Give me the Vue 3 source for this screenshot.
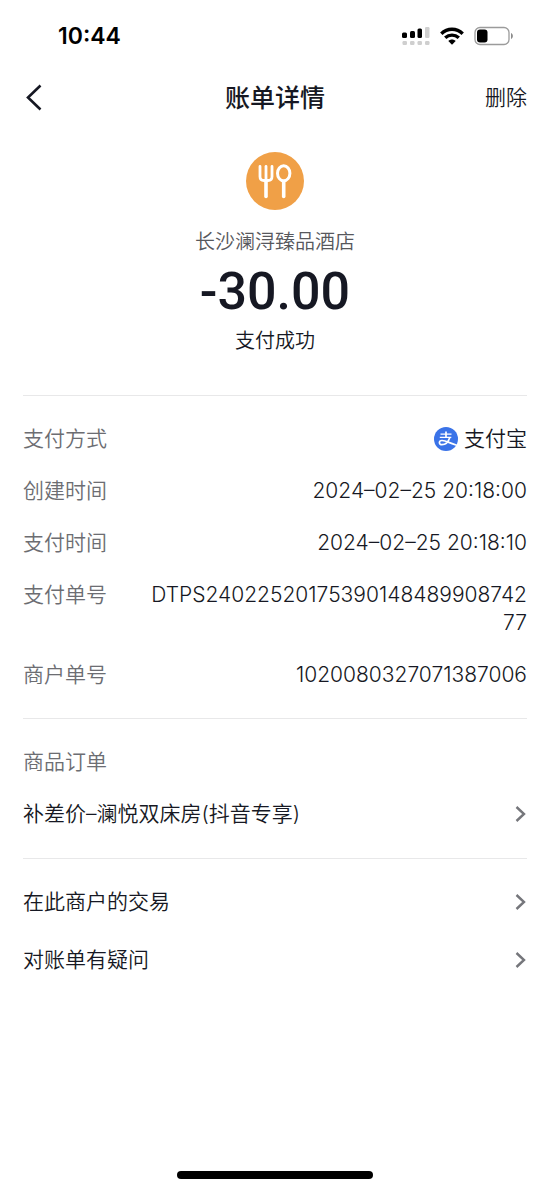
<script setup>
const details = [
  { label: '支付方式', value: '支付宝', alipay: true },
  { label: '创建时间', value: '2024–02–25 20:18:00' },
  { label: '支付时间', value: '2024–02–25 20:18:10' },
  { label: '支付单号', value: 'DTPS2402252017539014848990874277' },
  { label: '商户单号', value: '1020080327071387006' },
]
const links = ['在此商户的交易', '对账单有疑问']
</script>

<template>
  <div class="page">
    <div class="status">
      <time class="clock">10:44</time>
      <div class="status-icons">
        <svg width="28" height="20" viewBox="0 0 28 20" aria-hidden="true">
          <g fill="#000">
            <rect x="0" y="6.500" width="5" height="5.500" rx="1.500" />
            <rect x="8" y="5" width="5" height="7" rx="1.500" />
            <rect x="15.500" y="2.500" width="4.500" height="9.500" rx="1.500" />
          </g>
          <g fill="#cfcfcf">
            <rect x="23" y="1" width="4.500" height="11" rx="1.200" />
            <rect x="0.500" y="15" width="4.500" height="4" rx="1.200" />
            <rect x="8" y="15" width="4.500" height="4" rx="1.200" />
            <rect x="15.500" y="15" width="4.500" height="4" rx="1.200" />
            <rect x="23" y="15" width="4.500" height="4" rx="1.200" />
          </g>
        </svg>
        <svg width="24" height="18" viewBox="0 0 24 18" aria-hidden="true">
          <g fill="none" stroke="#000" stroke-width="3.400">
            <path d="M1.300 6.700C7.400 0.800 16.600 0.800 22.700 6.700" />
            <path d="M5.200 10.800C9.200 7.200 14.800 7.200 18.800 10.800" />
          </g>
          <path d="M8.300 14C10.500 12 13.500 12 15.700 14L12 17.800Z" fill="#000" />
        </svg>
        <svg width="40" height="20" viewBox="0 0 40 20" aria-hidden="true">
          <rect x="1" y="1.500" width="34" height="17" rx="5" fill="none" stroke="#9b9b9b" stroke-width="1.300" />
          <rect x="3" y="3.500" width="10.500" height="13" rx="3" fill="#000" />
          <path d="M37 7C39.500 8 39.500 12 37 13Z" fill="#8c8c8c" />
        </svg>
      </div>
    </div>

    <header class="nav">
      <button class="back" type="button" aria-label="返回">
        <svg width="20" height="28" viewBox="0 0 20 28" aria-hidden="true">
          <path d="M17.500 1.500L5 13.500L17.500 25.500" fill="none" stroke="#161823" stroke-width="2.600" />
        </svg>
      </button>
      <h1 class="title">账单详情</h1>
      <button class="delete" type="button">删除</button>
    </header>

    <main>
      <section class="summary">
        <svg class="category" width="58" height="58" viewBox="0 0 58 58" aria-hidden="true">
          <circle cx="29" cy="29" r="29" fill="#f0a047" />
          <g fill="none" stroke="#fff" stroke-linecap="round">
            <path d="M14 14.500V24.500Q14 28.500 18 28.500H22Q26 28.500 26 24.500V14.500" stroke-width="2.800" />
            <path d="M20 14.500V28" stroke-width="2.800" />
            <path d="M20 29.500V44.500" stroke-width="3.600" />
            <ellipse cx="37.700" cy="21.300" rx="6.200" ry="7.500" stroke-width="3" />
            <path d="M37.700 30V44.500" stroke-width="3.600" />
          </g>
        </svg>
        <p class="merchant">长沙澜浔臻品酒店</p>
        <p class="amount">-30.00</p>
        <p class="result">支付成功</p>
      </section>

      <dl class="section details">
        <div v-for="item in details" :key="item.label" class="row">
          <dt class="label">{{ item.label }}</dt>
          <dd class="value">
            <svg v-if="item.alipay" class="alipay" width="24" height="24" viewBox="0 0 24 24" aria-hidden="true">
              <circle cx="12" cy="12" r="12" fill="#3a73e8" />
              <g fill="none" stroke="#fff">
                <path d="M6.500 7.200H17.500M5.800 10.300H17.300" stroke-width="1.300" />
                <path d="M12 4.500V10.500" stroke-width="1.700" />
                <path d="M15.800 10.500C14.500 14.500 11.500 17.700 8 17.700C4.500 17.700 4.600 13.500 8 13.500C12 13.500 16 16.300 22.800 18.200" stroke-width="1.700" />
              </g>
            </svg>
            <span>{{ item.value }}</span>
          </dd>
        </div>
      </dl>

      <section class="section order">
        <h2 class="label">商品订单</h2>
        <a class="link" href="#">
          <span>补差价–澜悦双床房(抖音专享)</span>
          <svg class="chevron" width="12" height="18" viewBox="0 0 12 18" aria-hidden="true">
            <path d="M1.500 2L9 9L1.500 16" />
          </svg>
        </a>
      </section>

      <nav class="section more">
        <a v-for="text in links" :key="text" class="link" href="#">
          <span>{{ text }}</span>
          <svg class="chevron" width="12" height="18" viewBox="0 0 12 18" aria-hidden="true">
            <path d="M1.500 2L9 9L1.500 16" />
          </svg>
        </a>
      </nav>
    </main>

    <div class="home-bar"></div>
  </div>
</template>

<style>
body {
  margin: 0;
  background: #fff;
}
</style>

<style scoped>
.page {
  box-sizing: border-box;
  min-height: 100vh;
  display: flex;
  flex-direction: column;
  padding: 0 23px;
  background: #fff;
  color: #161823;
  font: 350 21px/28px Inter, "Noto Sans CJK SC", sans-serif;
}
h1, h2, p, dl, dd {
  margin: 0;
  font-size: inherit;
  font-weight: inherit;
}
button {
  padding: 0;
  border: 0;
  background: none;
  color: inherit;
  font: inherit;
}
.status {
  display: flex;
  align-items: center;
  justify-content: space-between;
  height: 72px;
  padding: 0 13px 0 35px;
}
.clock {
  color: #000;
  font-size: 23px;
  font-weight: 600;
}
.status-icons {
  display: flex;
  align-items: center;
  gap: 10px;
}
.nav {
  display: grid;
  grid-template-columns: 1fr auto 1fr;
  align-items: center;
  height: 52px;
}
.back {
  display: flex;
  justify-self: start;
}
.title {
  font-size: 25px;
  font-weight: 500;
}
.delete {
  justify-self: end;
}
.summary {
  display: flex;
  flex-direction: column;
  align-items: center;
  padding: 28px 0 40px;
  font-size: 20px;
}
.merchant {
  margin-top: 18px;
  color: #57585d;
}
.amount {
  margin: 6px 0 5px;
  font: 500 52px/60px Roboto, sans-serif;
}
.section {
  display: flex;
  flex-direction: column;
  gap: 24px;
  padding: 29px 0;
  border-top: 1px solid #e8e8e9;
}
.order {
  padding-bottom: 30px;
}
.row {
  display: flex;
  justify-content: space-between;
  gap: 40px;
}
.label {
  flex: none;
  color: #6c6d72;
}
.value {
  display: flex;
  align-items: center;
  justify-content: flex-end;
  gap: 6px;
  min-width: 0;
  text-align: right;
}
.value span {
  min-width: 0;
  overflow-wrap: anywhere;
}
.alipay {
  flex: none;
}
.link {
  display: flex;
  align-items: center;
  justify-content: space-between;
  color: inherit;
  text-decoration: none;
}
.more {
  gap: 30px;
}
.chevron {
  flex: none;
  fill: none;
  stroke: #75767b;
  stroke-width: 2.4;
}
.home-bar {
  align-self: center;
  width: 39%;
  height: 8px;
  margin: auto 0 11px;
  border-radius: 4px;
  background: #000;
}
</style>
